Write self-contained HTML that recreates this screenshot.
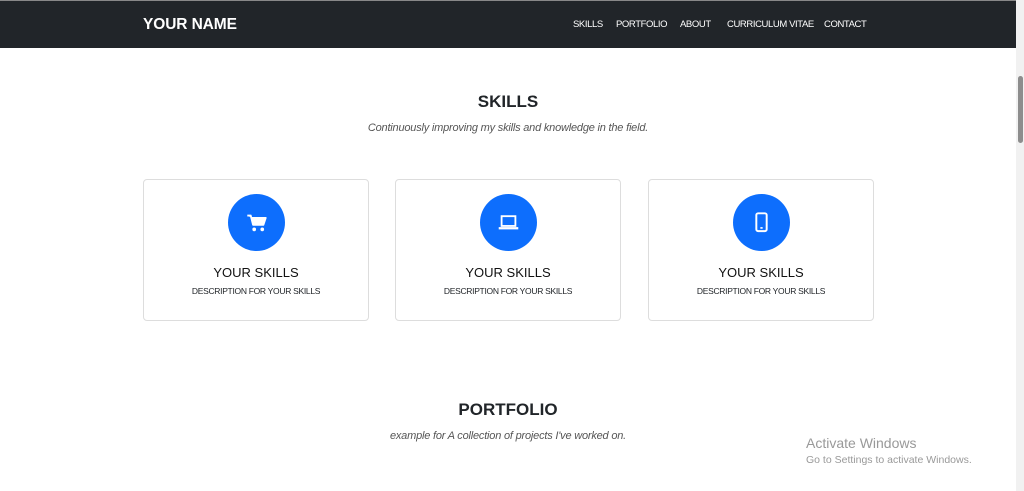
<!DOCTYPE html>
<html><head><style>
*{margin:0;padding:0;box-sizing:border-box}
body{width:1024px;height:491px;overflow:hidden;background:#fff;font-family:"Liberation Sans",sans-serif;position:relative;color:#212529}
.nav{position:absolute;left:0;top:0;width:1016px;height:48px;background:#212529;border-top:1px solid #888}
.brand{position:absolute;left:143px;top:15px;color:#fff;font-weight:bold;font-size:15.5px;letter-spacing:-0.1px}
.links a{position:absolute;top:18px;color:#fff;font-size:9.5px;text-decoration:none;letter-spacing:-0.4px}
.sb{position:absolute;left:1016px;top:0;width:8px;height:491px;background:#f1f1f1}
.thumb{position:absolute;left:1018px;top:76px;width:5px;height:67px;background:#8d8d8d;border-radius:3px}
h2{position:absolute;left:0;width:1016px;text-align:center;font-size:17px;font-weight:bold}
.sub{position:absolute;left:0;width:1016px;text-align:center;font-size:11px;font-style:italic;color:#555;letter-spacing:-0.2px}
.card{position:absolute;top:179px;width:226px;height:142px;border:1px solid #ddd;border-radius:4px;text-align:center}
.circ{position:absolute;left:84px;top:14px;width:57px;height:57px;border-radius:50%;background:#0d6efd}
.circ svg{position:absolute;left:17px;top:17px}
.t{position:absolute;top:85px;width:100%;font-size:13px;color:#111}
.d{position:absolute;top:106px;width:100%;font-size:8.5px;letter-spacing:-0.3px}
.aw{position:absolute;left:806px;top:435px;color:#999;font-size:14px}
.aw2{position:absolute;left:806px;top:454px;color:#999;font-size:10.5px}
</style></head><body>
<div class="nav"><div class="brand">YOUR NAME</div>
<div class="links"><a style="left:573px">SKILLS</a><a style="left:616px">PORTFOLIO</a><a style="left:680px">ABOUT</a><a style="left:727px">CURRICULUM VITAE</a><a style="left:824px">CONTACT</a></div></div>
<div class="sb"></div><div class="thumb"></div>
<h2 style="top:92px">SKILLS</h2>
<div class="sub" style="top:122px">Continuously improving my skills and knowledge in the field.</div>
<div class="card" style="left:143px"><div class="circ"><svg width="23" height="23" viewBox="0 0 20 20"><path d="M2 4h3l2 8h9l2-6H6" fill="#fff" stroke="#fff" stroke-width="1.6" stroke-linejoin="round"/><circle cx="8" cy="16" r="1.6" fill="#fff"/><circle cx="15" cy="16" r="1.6" fill="#fff"/></svg></div><div class="t">YOUR SKILLS</div><div class="d">DESCRIPTION FOR YOUR SKILLS</div></div>
<div class="card" style="left:395px"><div class="circ"><svg width="23" height="23" viewBox="0 0 20 20"><rect x="4" y="4.5" width="12" height="8.5" fill="none" stroke="#fff" stroke-width="1.6"/><rect x="1.5" y="14" width="17" height="2" fill="#fff"/></svg></div><div class="t">YOUR SKILLS</div><div class="d">DESCRIPTION FOR YOUR SKILLS</div></div>
<div class="card" style="left:648px"><div class="circ"><svg width="23" height="23" viewBox="0 0 20 20"><rect x="5.5" y="2" width="9" height="15.5" rx="1.5" fill="none" stroke="#fff" stroke-width="1.7"/><rect x="9" y="14" width="2" height="1.4" fill="#fff"/></svg></div><div class="t">YOUR SKILLS</div><div class="d">DESCRIPTION FOR YOUR SKILLS</div></div>
<h2 style="top:400px">PORTFOLIO</h2>
<div class="sub" style="top:430px">example for A collection of projects I've worked on.</div>
<div class="aw">Activate Windows</div>
<div class="aw2">Go to Settings to activate Windows.</div>
</body></html>
